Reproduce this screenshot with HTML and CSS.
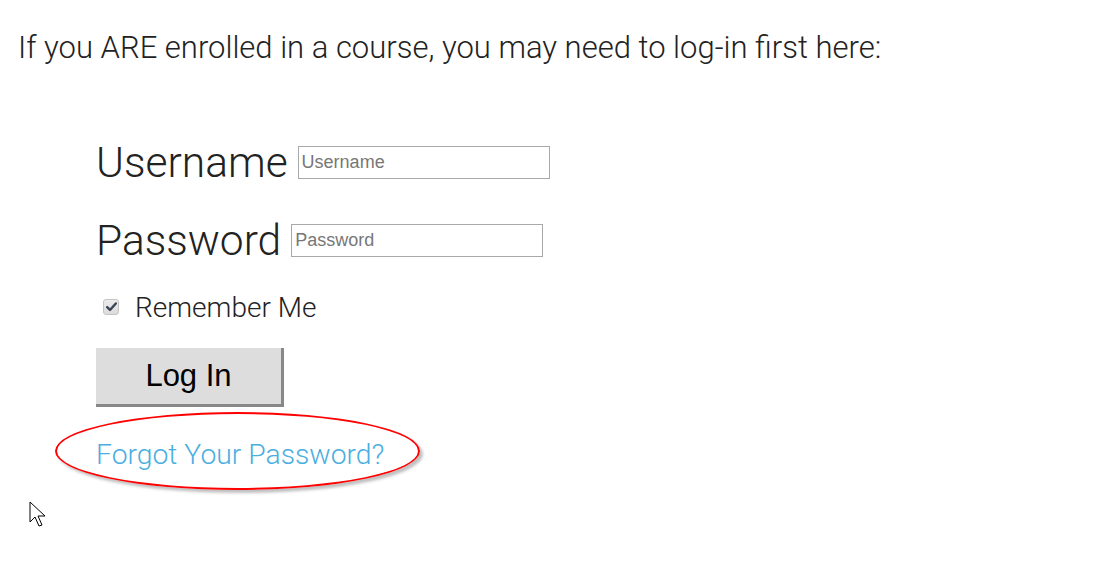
FILE: index.html
```html
<!DOCTYPE html>
<html lang="en">
<head>
  <meta charset="UTF-8" />
  <title>Log In</title>
  <link rel="stylesheet" href="styles.css">
</head>
<body>
  <p class="intro">If you ARE enrolled in a course, you may need to log-in first here:</p>

  <form class="login" action="#" method="POST">
    <div class="row">
      <label for="user">Username</label>
      <input type="text" id="user" placeholder="Username" />
    </div>
    <div class="row">
      <label for="pass">Password</label>
      <input type="password" id="pass" placeholder="Password" />
    </div>
    <label class="remember">
      <input type="checkbox" checked />
      <span class="box">
        <svg width="11" height="10" viewBox="0 0 11 10">
          <path d="M1.2 5.2 L4 8 L9.8 1.5" fill="none" stroke="#3a4452" stroke-width="2.4" stroke-linecap="round" stroke-linejoin="round"/>
        </svg>
      </span>
      <span>Remember Me</span>
    </label>
    <button type="submit" class="btn">Log In</button>
    <div class="forgot">
      <span class="ring"></span>
      <a href="#">Forgot Your Password?</a>
    </div>
  </form>

  <svg class="cursor" width="22" height="30" viewBox="0 0 22 30">
    <path d="M1 1 L1 21 L6 16 L10 25 L13 24 L9 15 L16 15 Z" fill="#fff" stroke="#000" stroke-width="1"/>
  </svg>
</body>
</html>
```

FILE: styles.css
```css
body {
  margin: 0;
  font-family: "Roboto", "Liberation Sans", sans-serif;
  font-weight: 300;
  color: #222;
  background: #fff;
  min-height: 576px;
}

.intro {
  margin: 0;
  padding: 28px 0 0 18px;
  font-size: 31px;
  line-height: 40px;
}

.login {
  padding: 64px 0 0 96px;
}

.row {
  display: flex;
  align-items: center;
  height: 60px;
  margin-bottom: 18px;
}

.row label {
  font-size: 42.5px;
  margin-right: 10px;
}

.row input {
  width: 252px;
  height: 33px;
  box-sizing: border-box;
  border: 1px solid #a9a9a9;
  padding: 0 3px;
  font-family: "Liberation Sans", Arial, sans-serif;
  font-size: 18px;
  color: #333;
}

.row input::placeholder {
  color: #777;
}

.remember {
  display: flex;
  align-items: center;
  height: 40px;
  margin-top: -1px;
  font-size: 28px;
}

.remember input {
  display: none;
}

.box {
  display: flex;
  align-items: center;
  justify-content: center;
  width: 14px;
  height: 14px;
  margin: 0 16px 0 7px;
  border: 1px solid #c4c4c4;
  border-radius: 3px;
  background: linear-gradient(#ececec, #dcdcdc);
}

.btn {
  display: block;
  margin-top: 21px;
  width: 188px;
  height: 59px;
  background: #dddddd;
  border: none;
  border-right: 3px solid #888;
  border-bottom: 3px solid #888;
  font-family: "Liberation Sans", Arial, sans-serif;
  font-size: 31px;
  color: #000;
  padding: 0;
}

.forgot {
  position: relative;
  margin-top: 6px;
  padding: 22px 0 30px;
  width: 300px;
  line-height: 40px;
}

.forgot a {
  position: relative;
  font-size: 28.3px;
  color: #4aaee0;
  text-decoration: none;
}

.ring {
  position: absolute;
  left: -41px;
  top: -1px;
  width: 361px;
  height: 74px;
  border: 2px solid #ff0000;
  border-radius: 50%;
  box-shadow: 3px 3px 3px rgba(0, 0, 0, 0.25);
}

.cursor {
  position: absolute;
  left: 29px;
  top: 501px;
}
```
